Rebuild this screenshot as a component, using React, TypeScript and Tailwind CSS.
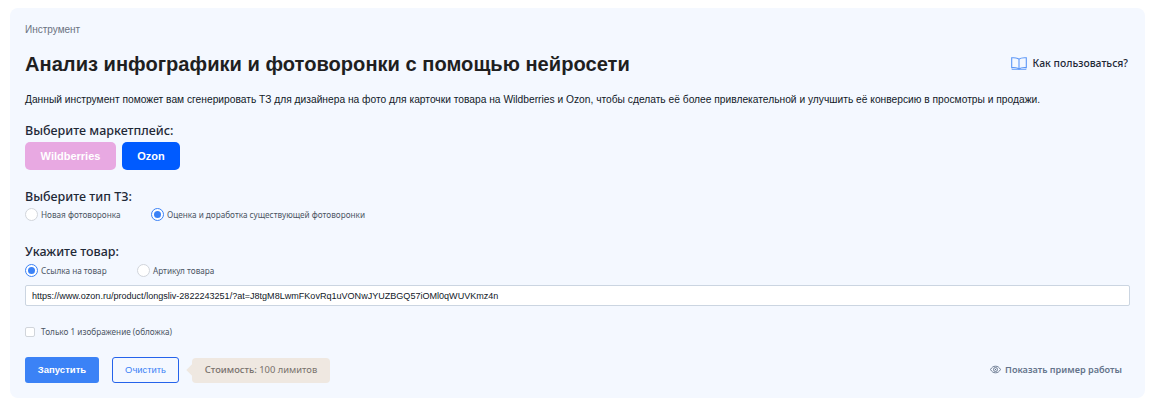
const arial = "font-['Liberation_Sans',Arial,sans-serif]"
const noto = "font-['Noto_Sans',sans-serif]"

function Radio({ label, checked, className }: { label: string; checked?: boolean; className?: string }) {
  return (
    <label className={`flex items-center gap-[3px] ${className ?? ''}`}>
      {checked ? (
        <span className="flex h-[13px] w-[13px] items-center justify-center rounded-full border border-[#3b82f6] bg-white">
          <span className="h-[7px] w-[7px] rounded-full bg-[#3b82f6]" />
        </span>
      ) : (
        <span className="h-[13px] w-[13px] rounded-full border border-[#d1d5db] bg-white" />
      )}
      <span className="text-[8.2px] leading-[13px] text-[#4b5563]">{label}</span>
    </label>
  )
}

export default function App() {
  return (
    <div className={`h-[406px] w-[1156px] bg-white px-[10px] pt-[8px] ${noto}`}>
      <div className="h-[390px] w-[1135px] rounded-[8px] bg-[#f4f8ff] px-[15px] pt-[15px]">
        <div className={`text-[10px] font-medium leading-[13px] text-[#6b7280] ${arial}`}>Инструмент</div>

        <div className="mt-[14px] flex h-[28px] items-center justify-between pr-[2px]">
          <h1 className={`text-[20.13px] font-bold leading-[28px] text-[#1f1f1f] ${arial}`}>
            Анализ инфографики и фотоворонки с помощью нейросети
          </h1>
          <a className="flex items-center gap-[6px] text-[10.4px] font-medium text-[#1f2937]">
            <svg width="16" height="13" viewBox="0 0 16 13" fill="none" stroke="#5b96f7" strokeWidth="1.1">
              <path d="M8 2.2C6.500.9 3.500.6.700.8v9.800c2.800-.2 5.800.1 7.300 1.400 1.500-1.300 4.500-1.600 7.300-1.400V.8C12.500.6 9.500.9 8 2.200Z" />
              <path d="M8 2.200V12M.7 12.200h14.600" />
            </svg>
            Как пользоваться?
          </a>
        </div>

        <p className={`mt-[15px] text-[10.24px] leading-[14px] text-[#111827] ${arial}`}>
          Данный инструмент поможет вам сгенерировать ТЗ для дизайнера на фото для карточки товара на Wildberries и Ozon, чтобы сделать её более привлекательной и улучшить её конверсию в просмотры и продажи.
        </p>

        <div className="mt-[16px] text-[12.5px] font-medium leading-[16px] text-[#1f2937]">Выберите маркетплейс:</div>
        <div className={`mt-[3px] flex gap-[6px] text-[11px] font-bold text-white ${arial}`}>
          <button className="h-[28px] w-[91px] rounded-[5px] bg-[#e8a9e2]">Wildberries</button>
          <button className="h-[28px] w-[58px] rounded-[5px] bg-[#005bff]">Ozon</button>
        </div>

        <div className="mt-[19px] text-[12.5px] font-medium leading-[16px] text-[#1f2937]">Выберите тип ТЗ:</div>
        <div className="mt-[3px] flex">
          <Radio label="Новая фотоворонка" className="w-[126px]" />
          <Radio label="Оценка и доработка существующей фотоворонки" checked />
        </div>

        <div className="mt-[23px] text-[12.5px] font-medium leading-[16px] text-[#1f2937]">Укажите товар:</div>
        <div className="mt-[4px] flex">
          <Radio label="Ссылка на товар" checked className="w-[112px]" />
          <Radio label="Артикул товара" />
        </div>
        <input
          readOnly
          value="https://www.ozon.ru/product/longsliv-2822243251/?at=J8tgM8LwmFKovRq1uVONwJYUZBGQ57iOMl0qWUVKmz4n"
          className={`mt-[8px] block h-[21px] w-[1105px] rounded-[2px] border border-[#cbd5e1] bg-white px-[6px] text-[9.06px] text-[#111827] outline-none ${arial}`}
        />

        <label className="mt-[19px] flex h-[14px] items-center gap-[6px]">
          <span className="h-[10px] w-[10px] rounded-[2px] border border-[#d1d5db] bg-white" />
          <span className="text-[8.2px] text-[#4b5563]">Только 1 изображение (обложка)</span>
        </label>

        <div className="mt-[18px] flex h-[26px] items-center">
          <button className={`h-[26px] w-[74px] rounded-[3px] bg-[#3b82f6] text-[9.5px] font-bold text-white ${arial}`}>Запустить</button>
          <button className={`ml-[13px] h-[26px] w-[67px] rounded-[3px] border border-[#2563eb] text-[9.4px] text-[#3b82f6] ${arial}`}>Очистить</button>
          <div className="relative ml-[13px] flex h-[25px] w-[138px] items-center justify-center rounded-[4px] bg-[#efe8e1] text-[9.4px] font-medium text-[#78716c]">
            <span className="absolute left-[-4px] h-[8px] w-[8px] rotate-45 bg-[#efe8e1]" />
            <span>Стоимость: <span className="font-normal">100 лимитов</span></span>
          </div>
          <a className="ml-auto mr-[8px] flex items-center gap-[4px] text-[9.15px] font-semibold text-[#64748b]">
            <svg width="11" height="11" viewBox="0 0 11 11" fill="none" stroke="#64748b" strokeWidth="0.9">
              <path d="M.5 5.500C1.700 3.300 3.400 2.200 5.500 2.200s3.800 1.100 5 3.300c-1.200 2.200-2.900 3.300-5 3.300S1.700 7.700.5 5.500Z" />
              <circle cx="5.500" cy="5.500" r="2" />
              <circle cx="5.500" cy="5.500" r="0.7" fill="#64748b" stroke="none" />
            </svg>
            Показать пример работы
          </a>
        </div>
      </div>
    </div>
  )
}
